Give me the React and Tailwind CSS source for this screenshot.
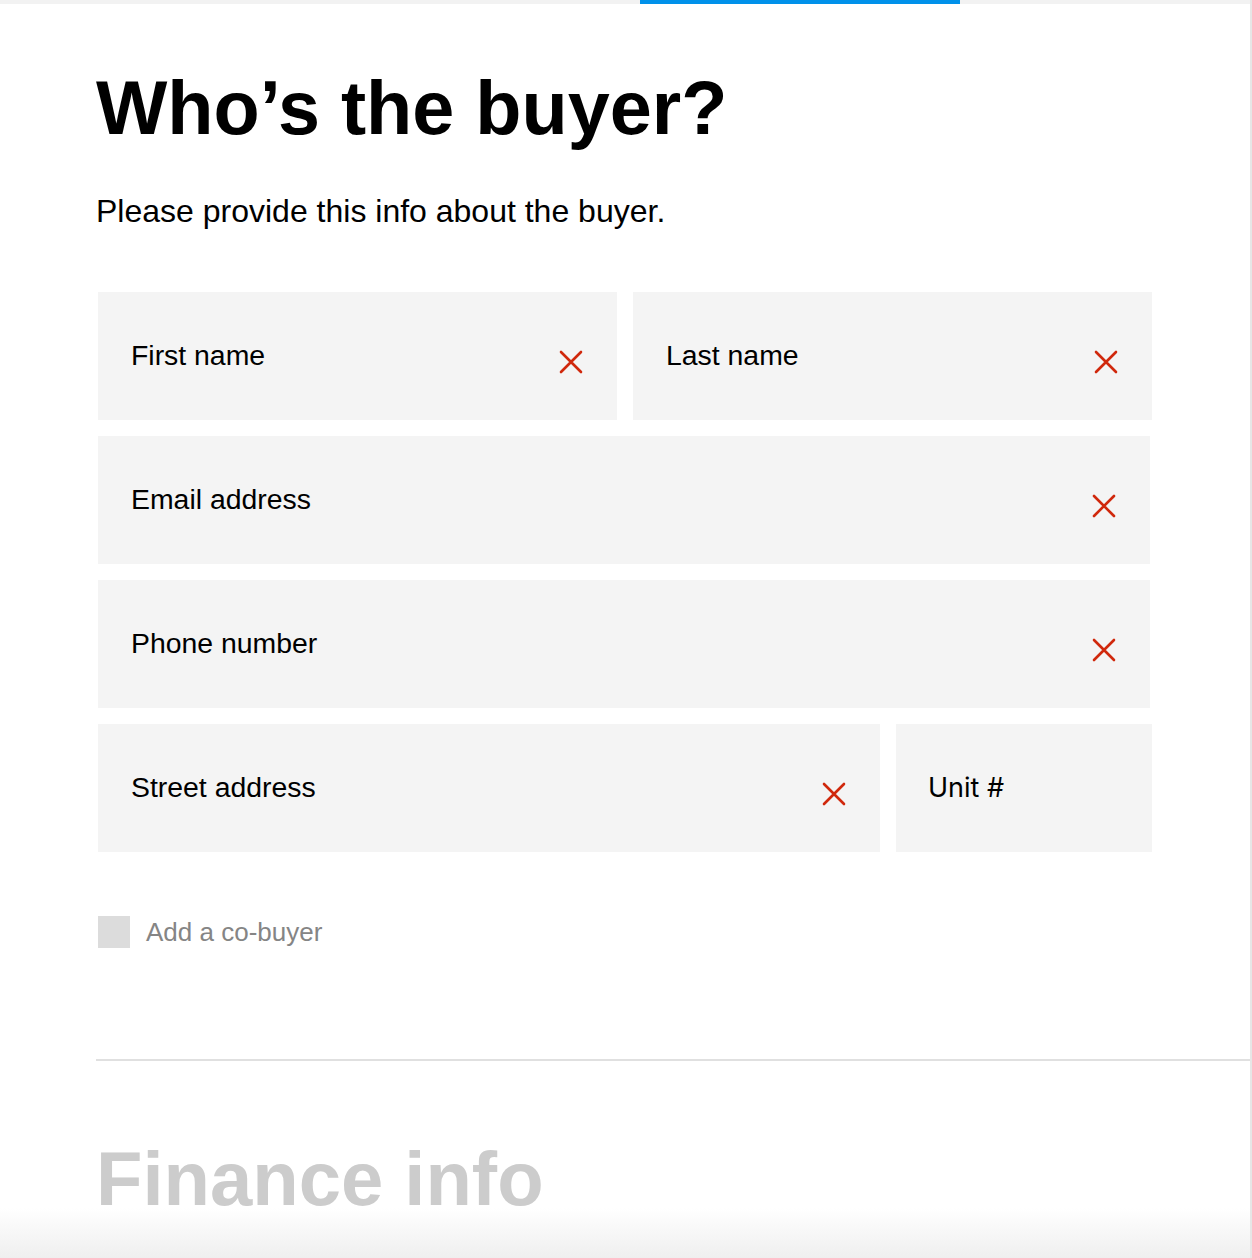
import React from 'react';

const font = { fontFamily: '"Liberation Sans", Arial, Helvetica, sans-serif' };

// red clear "x" shown in filled fields
const ClearIcon = () => (
  <svg width="24" height="24" viewBox="0 0 24 24" className="mt-[13px] shrink-0" aria-hidden="true">
    <path d="M2 2 L22 22 M22 2 L2 22" stroke="#d0280c" strokeWidth="2.6" strokeLinecap="round" fill="none" />
  </svg>
);

const Field = ({ label, clear = true, className = '', labelClass = 'text-[28.4px]' }) => (
  <div className={`h-[128px] bg-[#f4f4f4] flex items-center justify-between pl-[33px] pr-[34px] ${className}`}>
    <span className={`${labelClass} leading-none text-black`}>{label}</span>
    {clear && <ClearIcon />}
  </div>
);

export default function App() {
  return (
    <div className="relative h-[1258px] overflow-hidden bg-white border-r-2 border-[#e6e6e6]" style={font}>
      {/* progress strip */}
      <div className="h-[4px] bg-[#f2f2f2] flex">
        <div className="w-[640px]" />
        <div className="w-[320px] bg-[#0091ea]" />
      </div>

      <div className="pl-[96px]">
        <h1 className="mt-[67px] text-[75.6px] leading-none font-bold text-black">Who’s the buyer?</h1>
        <p className="mt-[48px] text-[32px] leading-none text-black">Please provide this info about the buyer.</p>

        <div className="mt-[65px] ml-[2px] w-[1054px] flex flex-col gap-4">
          <div className="flex gap-4">
            <Field label="First name" className="flex-1" />
            <Field label="Last name" className="flex-1" />
          </div>
          <Field label="Email address" className="w-[1052px]" />
          <Field label="Phone number" className="w-[1052px]" />
          <div className="flex gap-4">
            <Field label="Street address" className="flex-1" />
            <Field
              label="Unit #"
              clear={false}
              className="w-[256px] !pl-[32px]"
              labelClass="text-[27px] font-['Inter',sans-serif]"
            />
          </div>
        </div>

        <label className="mt-[64px] ml-[2px] flex items-center gap-4 w-max">
          <span className="w-[32px] h-[32px] bg-[#dcdcdc]" />
          <span className="text-[26px] leading-none text-[#858585]">Add a co-buyer</span>
        </label>

        <div className="mt-[111px] h-[2px] bg-[#e0e0e0]" />

        <h2 className="mt-[80px] text-[76px] leading-none font-bold text-[#cccccc]">Finance info</h2>
      </div>

      {/* fade at the bottom of the scroll area */}
      <div className="pointer-events-none absolute bottom-0 left-0 right-0 h-[50px] bg-gradient-to-b from-transparent to-[#efefef]" />
    </div>
  );
}
